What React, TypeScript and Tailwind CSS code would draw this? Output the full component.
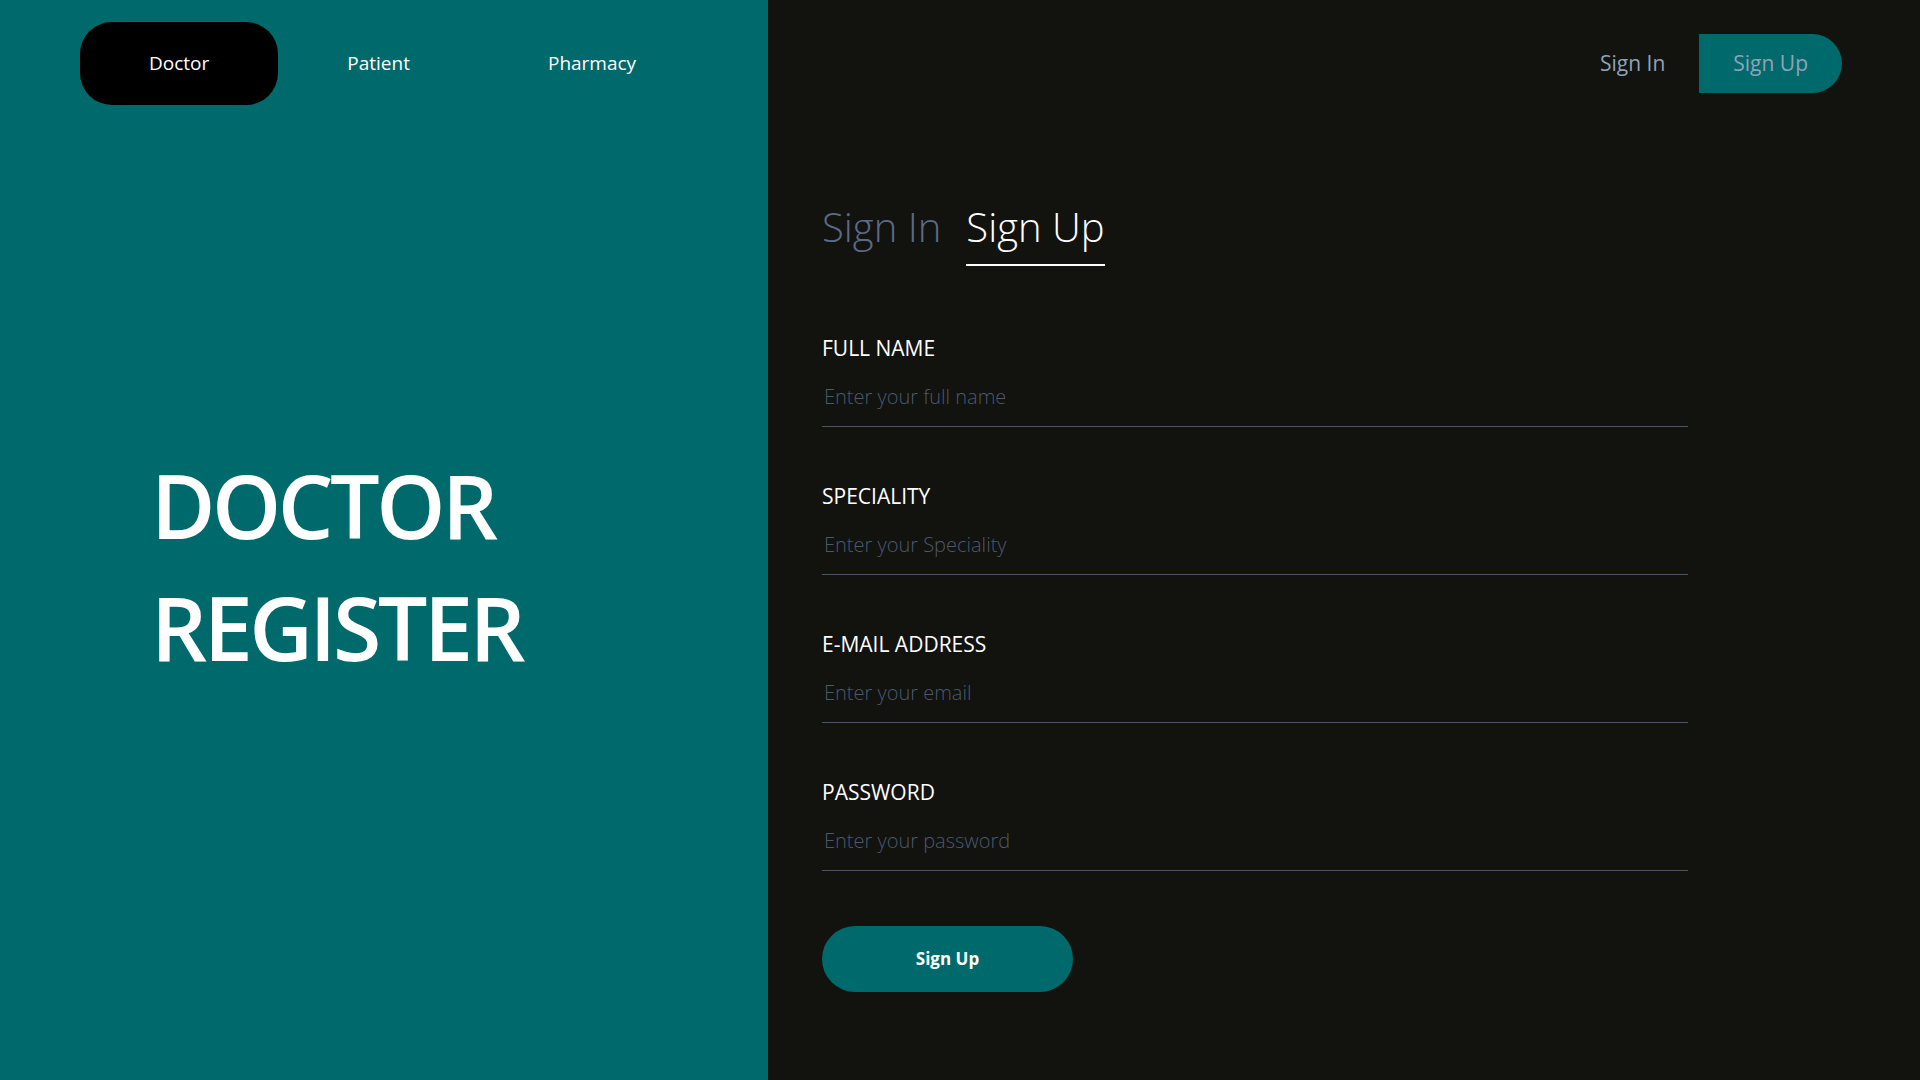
import { useState } from "react";

const roles = ["Doctor", "Patient", "Pharmacy"];

const fields = [
  { label: "FULL NAME", placeholder: "Enter your full name", type: "text" },
  { label: "SPECIALITY", placeholder: "Enter your Speciality", type: "text" },
  { label: "E-MAIL ADDRESS", placeholder: "Enter your email", type: "email" },
  { label: "PASSWORD", placeholder: "Enter your password", type: "password" },
];

export default function App() {
  const [role, setRole] = useState("Doctor");

  return (
    <div className="flex min-h-[1182px] font-['Open_Sans',sans-serif]">
      {/* left side */}
      <div className="w-[768px] shrink-0 bg-[#00696b] text-white">
        <nav className="flex pl-[80px] pt-[22px]">
          {roles.map((r) => (
            <button
              key={r}
              onClick={() => setRole(r)}
              className={
                r === role
                  ? "h-[83px] rounded-[32px] bg-black px-[69px] text-[19px] leading-none text-white"
                  : "h-[83px] rounded-[32px] px-[69px] text-[19px] leading-none text-white"
              }
            >
              {r}
            </button>
          ))}
        </nav>
        <h1 className="mt-[339px] pl-[151px] text-[88px] font-semibold leading-[122px] tracking-[-0.04em]">
          {role.toUpperCase()}
          <br />
          REGISTER
        </h1>
      </div>

      {/* right side */}
      <div className="flex-1 bg-[#12120f] pl-[54px] pr-[78px]">
        <div className="flex justify-end pt-[34px]">
          <a className="flex h-[59px] items-center px-[34px] text-[21px] text-[#8fa3b8]">
            Sign In
          </a>
          <a className="flex h-[59px] items-center rounded-r-[32px] bg-[#00696b] px-[34px] text-[21px] text-[#8fa3b8]">
            Sign Up
          </a>
        </div>

        <div className="mt-[114px] flex items-start gap-[25px] font-light">
          <span className="text-[40px] leading-[40px] text-[#5b6b85]">Sign In</span>
          <span className="border-b-2 border-white pb-[17px] text-[40px] leading-[40px] text-white">
            Sign Up
          </span>
        </div>

        <form className="mt-[72px] flex w-[866px] flex-col gap-[59px]" onSubmit={(e) => e.preventDefault()}>
          {fields.map((f) => (
            <div key={f.label} className="flex flex-col gap-[8px]">
              <label className="text-[21px] leading-[21px] text-white">{f.label}</label>
              <input
                type={f.type}
                placeholder={f.placeholder}
                className="h-[60px] w-full border-b border-[#4a5568] bg-transparent px-[2px] text-[20px] font-light text-white outline-none placeholder:text-[#4b596d]"
              />
            </div>
          ))}
        </form>

        <button className="mt-[55px] h-[66px] w-[251px] rounded-full bg-[#00696b] text-[17px] font-bold text-white">
          Sign Up
        </button>
      </div>
    </div>
  );
}
